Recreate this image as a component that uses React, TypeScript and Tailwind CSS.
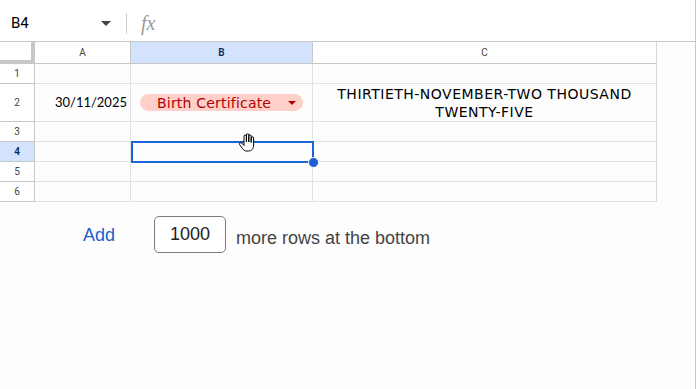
import React from 'react'

const cellFont = { fontFamily: '"DejaVu Sans", "Noto Sans", sans-serif' }

function Hand() {
  return (
    <svg width="18" height="20" viewBox="0 0 18 20" className="absolute left-[238px] top-[133px]">
      <path
        d="M6 11 V3.2 a1.2 1.2 0 0 1 2.4 0 V9 V2 a1.2 1.2 0 0 1 2.4 0 V9 V3 a1.2 1.2 0 0 1 2.4 0 V9.5 V5 a1.2 1.2 0 0 1 2.4 0 V12 c0 3.5 -2 6 -5 6 h-2 c-2 0 -3 -1 -4.2 -2.6 L1.6 11.6 a1.3 1.3 0 0 1 2 -1.6 L6 12.5 Z"
        fill="#fff"
        stroke="#000"
        strokeWidth="1"
        strokeLinejoin="round"
      />
    </svg>
  )
}

export default function App() {
  const rows = [
    { n: '1', h: 'h-[20px]' },
    { n: '2', h: 'h-[38px]' },
    { n: '3', h: 'h-[20px]' },
    { n: '4', h: 'h-[20px]' },
    { n: '5', h: 'h-[20px]' },
    { n: '6', h: 'h-[20px]' },
  ]

  return (
    <div className="relative w-[696px] h-[389px] bg-[#fdfdfd] border-r border-[#c7c7c7] overflow-hidden" style={{ fontFamily: 'Roboto, Arial, sans-serif' }}>
      {/* formula bar */}
      <div className="flex items-center h-[42px] pt-[5px] border-b border-[#c7c7c7] bg-white">
        <div className="w-[126px] flex items-center pl-[11px] pr-[15px] text-[15px] text-black">
          <span className="flex-1">B4</span>
          <svg width="10" height="5" viewBox="0 0 10 5"><path d="M0 0 H10 L5 5 Z" fill="#444" /></svg>
        </div>
        <div className="w-px h-[21px] bg-[#d0d0d0]" />
        <span className="ml-[14px] text-[20px] italic text-[#9a9a9a] leading-none" style={{ fontFamily: '"Liberation Serif", serif' }}>fx</span>
      </div>

      {/* grid */}
      <div className="flex">
        <div className="w-[657px] border-r border-[#d8d8d8]">
          {/* header row */}
          <div className="flex h-[22px] text-[10px] text-[#444]">
            <div className="w-[35px] border-r-[4px] border-b-[4px] border-[#c7c7c7] bg-white" />
            <div className="w-[96px] flex items-center justify-center border-r border-b border-[#c7c7c7] bg-white">A</div>
            <div className="w-[182px] flex items-center justify-center border-r border-b border-[#c7c7c7] bg-[#d3e3fd] text-[#0b2a5c] font-semibold">B</div>
            <div className="flex-1 flex items-center justify-center border-b border-[#c7c7c7] bg-white">C</div>
          </div>
          {rows.map((r) => (
            <div key={r.n} className={`flex ${r.h}`}>
              <div className={`w-[35px] flex items-center justify-center border-r border-b border-[#c7c7c7] text-[10px] ${r.n === '4' ? 'bg-[#d3e3fd] text-[#0b2a5c] font-semibold' : 'bg-white text-[#444]'}`}>{r.n}</div>
              <div className="w-[96px] flex items-center justify-end pr-[3px] border-r border-b border-[#e2e2e2] text-[14px] text-black" style={{ fontFamily: 'Lato, sans-serif' }}>
                {r.n === '2' ? <span className="text-[13px] pt-[1px]">30/11/2025</span> : ''}
              </div>
              <div className="w-[182px] flex items-center px-[9px] border-r border-b border-[#e2e2e2]" style={cellFont}>
                {r.n === '2' && (
                  <div className="flex items-center w-full h-[17px] rounded-full bg-[#ffcfc9] text-[#b10202] text-[14px] pl-[17px] pr-[7px]">
                    <span className="flex-1 leading-none tracking-[0.2px]">Birth Certificate</span>
                    <svg width="8" height="4" viewBox="0 0 8 4"><path d="M0 0 H8 L4 4 Z" fill="#b10202" /></svg>
                  </div>
                )}
              </div>
              <div className="flex-1 flex items-center justify-center border-b border-[#e2e2e2] text-[14px] text-black text-center leading-[18px] tracking-[0.5px]" style={cellFont}>
                {r.n === '2' && (
                  <span>THIRTIETH-NOVEMBER-TWO THOUSAND<br />TWENTY-FIVE</span>
                )}
              </div>
            </div>
          ))}
        </div>
      </div>

      {/* selection */}
      <div className="absolute left-[131px] top-[141px] w-[183px] h-[22px] border-2 border-[#1a66d9]" />
      <div className="absolute left-[308px] top-[157px] w-[11px] h-[11px] rounded-full bg-[#1a5fd6] border border-white" />
      <Hand />

      {/* add rows */}
      <div className="flex items-center mt-[14px] text-[18px]" style={{ fontFamily: '"Liberation Sans", Arial, sans-serif' }}>
        <span className="ml-[83px] w-[71px] text-[#1a5fd0] mt-[1px]">Add</span>
        <div className="w-[72px] h-[37px] flex items-center justify-center rounded-[5px] border border-[#7a7a7a] text-[#222] bg-white">1000</div>
        <span className="ml-[10px] text-[#444] pt-[8px]">more rows at the bottom</span>
      </div>
    </div>
  )
}
